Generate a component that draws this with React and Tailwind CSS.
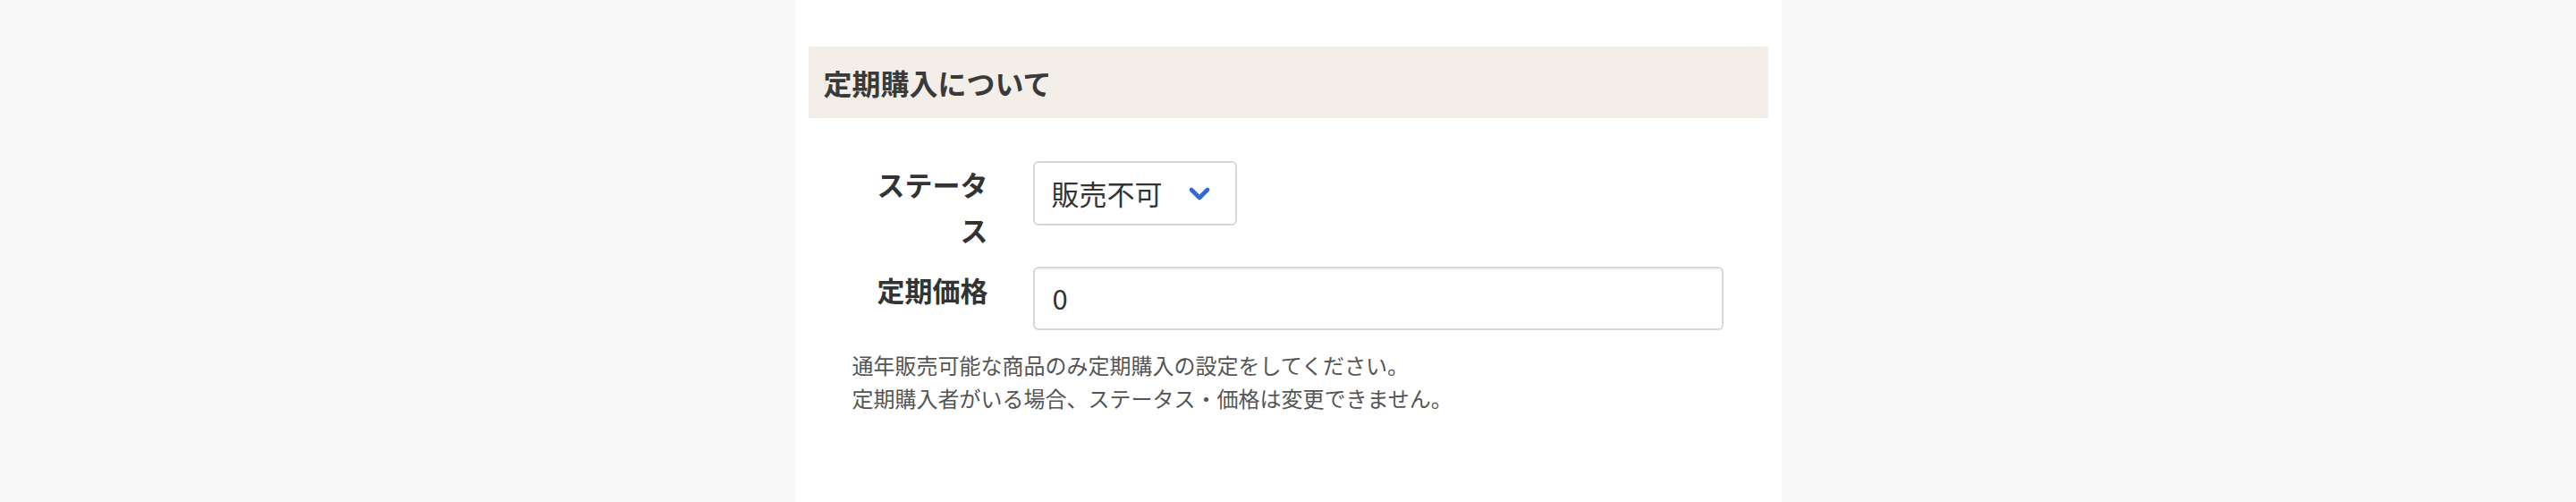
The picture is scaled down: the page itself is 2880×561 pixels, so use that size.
export default function App() {
  const jp = { fontFamily: '"Noto Sans CJK JP", "Noto Sans", sans-serif' };

  return (
    <div className="min-h-[561px] bg-[#f8f8f8] flex justify-center" style={jp}>
      {/* パネル */}
      <div className="w-[1103px] min-h-[561px] bg-white pt-[52px] px-[15px]">
        <h2 className="h-[80px] bg-[#f3eee8] flex items-center pl-[17px] text-[32px] font-bold text-[#3a3a3a]">
          定期購入について
        </h2>

        {/* ステータス */}
        <div className="flex items-start mt-[48px]">
          <div className="w-[201px] pl-[70px] text-right text-[31px] leading-[51px] font-bold text-[#333]">
            ステータス
          </div>
          <div className="ml-[50px] w-[228px] h-[72px] border-2 border-[#d8d8d8] rounded-[6px] flex items-center pl-[19px] pr-[26px] justify-between text-[31px] text-[#333]">
            <span>販売不可</span>
            <svg width="28" height="20" viewBox="0 0 28 20" fill="none">
              <path d="M5 6 L14 15 L23 6" stroke="#2f6bd6" strokeWidth="4.6" strokeLinecap="round" strokeLinejoin="round" />
            </svg>
          </div>
        </div>

        {/* 定期価格 */}
        <div className="flex items-start mt-[16px]">
          <div className="w-[201px] pl-[70px] text-right text-[31px] leading-[51px] font-bold text-[#333]">
            定期価格
          </div>
          <div className="ml-[50px] w-[772px] h-[71px] border-2 border-[#d8d8d8] rounded-[6px] shadow-[inset_0_2px_2px_rgba(0,0,0,0.05)] flex items-center pl-[20px] text-[31px] text-[#333]">
            0
          </div>
        </div>

        {/* 注意書き */}
        <div className="mt-[20px] pl-[49px] text-[24px] leading-[37px] text-[#555]">
          <p>通年販売可能な商品のみ定期購入の設定をしてください。</p>
          <p>定期購入者がいる場合、ステータス・価格は変更できません。</p>
        </div>
      </div>
    </div>
  );
}
